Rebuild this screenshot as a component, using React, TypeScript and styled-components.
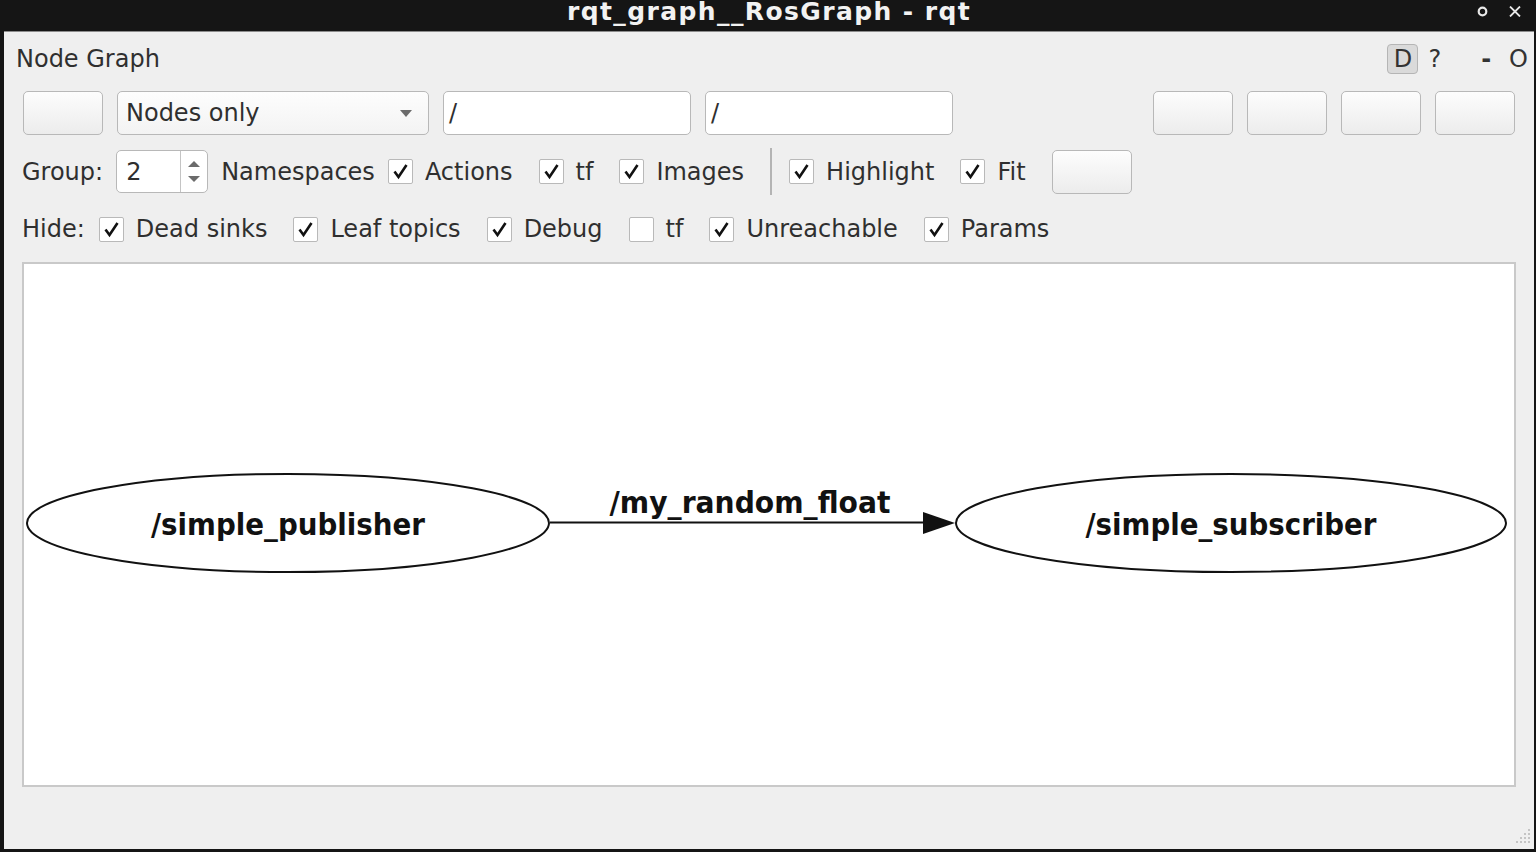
import React from 'react'
import styled, { createGlobalStyle } from 'styled-components'

const GlobalStyle = createGlobalStyle`
  html, body {
    margin: 0;
    padding: 0;
    background: #151515;
    overflow: hidden;
  }
`

const Window = styled.div`
  width: 1536px;
  height: 852px;
  box-sizing: border-box;
  padding: 0 2px 3px 4px;
  background: #151515;
  display: flex;
  flex-direction: column;
  font-family: 'DejaVu Sans', 'Liberation Sans', sans-serif;
  color: #2f2f2f;
`

const TitleBar = styled.div`
  height: 31px;
  flex-shrink: 0;
  margin-left: -4px;
  display: grid;
  grid-template-columns: 1fr auto 1fr;
  align-items: start;
`

const Title = styled.div`
  grid-column: 2;
  font-weight: bold;
  font-size: 25px;
  line-height: 24px;
  letter-spacing: 1.4px;
  color: #f2f2f2;
  white-space: nowrap;
  margin-left: 4px;
`

const TitleButtons = styled.div`
  justify-self: end;
  display: flex;
  gap: 21px;
  margin: 6px 13px 0 0;
`

const Body = styled.div`
  flex: 1;
  position: relative;
  background: #efefef;
  border-top: 1px solid #8c8c8c;
  padding: 0 18px;
  display: flex;
  flex-direction: column;
`

const Header = styled.div`
  margin: 12px -12px 0 -6px;
  height: 30px;
  display: flex;
  align-items: center;
  font-size: 24px;
`

const HeaderTitle = styled.span`
  flex: 1;
`

const DockButton = styled.span`
  width: 29px;
  height: 28px;
  border: 1px solid #b5b5b5;
  border-radius: 4px;
  background: #dadada;
  display: flex;
  align-items: center;
  justify-content: center;
  color: #333;
`

const HeaderGlyph = styled.span<{ $gap: number; $bold?: boolean }>`
  margin-left: ${(p) => p.$gap}px;
  font-weight: ${(p) => (p.$bold ? 'bold' : 'normal')};
  color: #333;
`

const Row = styled.div<{ $top: number; $height: number }>`
  margin-top: ${(p) => p.$top}px;
  height: ${(p) => p.$height}px;
  display: flex;
  align-items: center;
  gap: 13px;
  font-size: 24px;
  white-space: nowrap;
`

const RowLabel = styled.span<{ $pad?: number }>`
  margin-right: ${(p) => p.$pad ?? 0}px;
`

const ToolRow = styled(Row)`
  gap: 14px;
  padding: 0 1px;
  align-items: stretch;
`

const Spacer = styled.div`
  flex: 1;
`

const PushButton = styled.div`
  width: 80px;
  height: 44px;
  box-sizing: border-box;
  border: 1px solid #b8b8b8;
  border-radius: 5px;
  background: linear-gradient(#fdfdfd, #ececec);
`

const Combo = styled.div`
  width: 312px;
  box-sizing: border-box;
  border: 1px solid #b8b8b8;
  border-radius: 5px;
  background: linear-gradient(#fdfdfd, #f3f3f3);
  display: flex;
  align-items: center;
  justify-content: space-between;
  padding: 0 16px 0 8px;
`

const LineEdit = styled.div`
  width: 248px;
  box-sizing: border-box;
  border: 1px solid #b8b8b8;
  border-radius: 5px;
  background: #fff;
  display: flex;
  align-items: center;
  padding-left: 5px;
`

const SpinBox = styled.div`
  width: 92px;
  height: 43px;
  box-sizing: border-box;
  border: 1px solid #b8b8b8;
  border-radius: 5px;
  background: #fff;
  display: flex;
`

const SpinValue = styled.div`
  flex: 1;
  display: flex;
  align-items: center;
  padding-left: 9px;
  border-right: 1px solid #c4c4c4;
`

const SpinArrows = styled.div`
  width: 26px;
  display: flex;
  flex-direction: column;
  align-items: center;
  justify-content: center;
  gap: 9px;
`

const CheckItem = styled.label`
  display: flex;
  align-items: center;
  gap: 12px;
  & + &,
  & + div {
    margin-left: 13px;
  }
`

const Box = styled.span`
  width: 25px;
  height: 25px;
  box-sizing: border-box;
  border: 1px solid #b9b9b9;
  border-radius: 2px;
  background: #fff;
  display: flex;
  align-items: center;
  justify-content: center;
`

const Separator = styled.div`
  width: 2px;
  height: 47px;
  background: #b4b4b4;
  margin: 0 4px 0 13px;
`

const FitButton = styled(PushButton)`
  height: 44px;
`

const GraphView = styled.div`
  margin-top: 18px;
  height: 525px;
  box-sizing: border-box;
  border: 2px solid #c9c9c9;
  background: #fff;
  overflow: hidden;
`

const Grip = styled.svg`
  position: absolute;
  right: 3px;
  bottom: 2px;
`

const Check = ({ on = true, label }: { on?: boolean; label: string }) => (
  <CheckItem>
    <Box>
      {on && (
        <svg width="17" height="17" viewBox="0 0 17 17">
          <path d="M2.5 8.5 L6.5 14 L14.5 2" fill="none" stroke="#111" strokeWidth="2.6" />
        </svg>
      )}
    </Box>
    {label}
  </CheckItem>
)

const Graph = () => (
  <svg width="1490" height="521" viewBox="0 0 1490 521">
    <g fill="none" stroke="#111" strokeWidth="2">
      <ellipse cx="264" cy="259" rx="261" ry="49" />
      <ellipse cx="1207" cy="259" rx="275" ry="49" />
      <line x1="526" y1="258.5" x2="902" y2="258.5" />
    </g>
    <polygon points="899,248 931,259 899,270" fill="#111" />
    <g fontFamily="'DejaVu Sans', sans-serif" fontWeight="bold" fontSize="31" fill="#111" textAnchor="middle">
      <text x="264" y="271" textLength="274" lengthAdjust="spacingAndGlyphs">/simple_publisher</text>
      <text x="1207" y="271" textLength="291" lengthAdjust="spacingAndGlyphs">/simple_subscriber</text>
      <text x="726" y="249" textLength="281" lengthAdjust="spacingAndGlyphs">/my_random_float</text>
    </g>
  </svg>
)

export default function App() {
  return (
    <>
      <GlobalStyle />
      <Window>
        <TitleBar>
          <Title>rqt_graph__RosGraph - rqt</Title>
          <TitleButtons>
            <svg width="11" height="11" viewBox="0 0 11 11">
              <circle cx="5.5" cy="5.5" r="3.8" fill="none" stroke="#e8e8e8" strokeWidth="2.2" />
            </svg>
            <svg width="12" height="11" viewBox="0 0 12 11">
              <path d="M1 0.5 L11 10.5 M11 0.5 L1 10.5" stroke="#e8e8e8" strokeWidth="1.8" />
            </svg>
          </TitleButtons>
        </TitleBar>
        <Body>
          <Header>
            <HeaderTitle>Node Graph</HeaderTitle>
            <DockButton>D</DockButton>
            <HeaderGlyph $gap={10}>?</HeaderGlyph>
            <HeaderGlyph $gap={40} $bold>-</HeaderGlyph>
            <HeaderGlyph $gap={18}>O</HeaderGlyph>
          </Header>

          <ToolRow $top={17} $height={44}>
            <PushButton />
            <Combo>
              <span>Nodes only</span>
              <svg width="12" height="7" viewBox="0 0 12 7">
                <polygon points="0,0 12,0 6,7" fill="#6b6b6b" />
              </svg>
            </Combo>
            <LineEdit>/</LineEdit>
            <LineEdit>/</LineEdit>
            <Spacer />
            <PushButton />
            <PushButton />
            <PushButton />
            <PushButton />
          </ToolRow>

          <Row $top={14} $height={45}>
            <RowLabel>Group:</RowLabel>
            <SpinBox>
              <SpinValue>2</SpinValue>
              <SpinArrows>
                <svg width="12" height="6" viewBox="0 0 12 6">
                  <polygon points="0,6 12,6 6,0" fill="#6b6b6b" />
                </svg>
                <svg width="12" height="6" viewBox="0 0 12 6">
                  <polygon points="0,0 12,0 6,6" fill="#6b6b6b" />
                </svg>
              </SpinArrows>
            </SpinBox>
            <RowLabel>Namespaces</RowLabel>
            <Check label="Actions" />
            <Check label="tf" />
            <Check label="Images" />
            <Separator />
            <Check label="Highlight" />
            <Check label="Fit" />
            <FitButton />
          </Row>

          <Row $top={20} $height={30}>
            <RowLabel $pad={1}>Hide:</RowLabel>
            <Check label="Dead sinks" />
            <Check label="Leaf topics" />
            <Check label="Debug" />
            <Check label="tf" on={false} />
            <Check label="Unreachable" />
            <Check label="Params" />
          </Row>

          <GraphView>
            <Graph />
          </GraphView>

          <Grip width="20" height="20" viewBox="0 0 20 20">
            <g fill="#c4c4c4">
              <rect x="17" y="2" width="2" height="2" />
              <rect x="13" y="6" width="2" height="2" />
              <rect x="17" y="6" width="2" height="2" />
              <rect x="9" y="10" width="2" height="2" />
              <rect x="13" y="10" width="2" height="2" />
              <rect x="17" y="10" width="2" height="2" />
              <rect x="5" y="14" width="2" height="2" />
              <rect x="9" y="14" width="2" height="2" />
              <rect x="13" y="14" width="2" height="2" />
              <rect x="17" y="14" width="2" height="2" />
            </g>
          </Grip>
        </Body>
      </Window>
    </>
  )
}
